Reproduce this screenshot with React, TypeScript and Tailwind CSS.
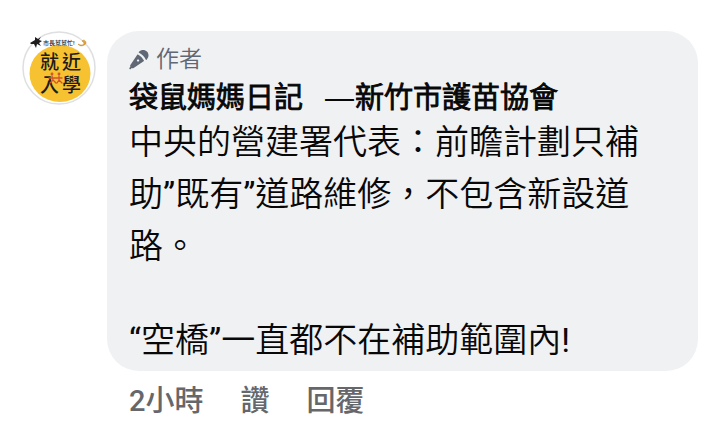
function Avatar() {
  return (
    <svg viewBox="0 0 74 74" className="size-[74px] shrink-0" role="img" aria-label="就近入學">
      <circle cx="37" cy="37" r="36" fill="#fff" stroke="#dedfe1" strokeWidth="1.5" />
      <ellipse cx="38" cy="42.500" rx="30.500" ry="28.500" fill="#f7c231" />
      <g fill="#1c1c1c">
        <path d="M8 12l5-3 0-3 3 2 3-2-2 3 3 1-3 2 2 3-4-2-1 4-2-4-3 0z" />
        <text x="21" y="14" fontSize="6" fontWeight="500">市長幫幫忙!</text>
        <g fontSize="19" fontWeight="500">
          <text x="18" y="38">就</text>
          <text x="40" y="38">近</text>
          <text x="18" y="61">入</text>
          <text x="40" y="61">學</text>
        </g>
      </g>
      <path
        d="M56 13c3 2 6 1 6-1 0-1-1-1-2-2 2-2 4 0 4 2-1 3-6 4-8 1z"
        fill="#e9a52c"
        stroke="#b9791c"
        strokeWidth="0.500"
      />
      <g fill="none" stroke="#d2552b" strokeWidth="1.300" strokeLinecap="round">
        <path d="M30 45l1 4-3 3M31 49l3 3M27 47l7 0M37 45v4l-2 3M37 49l3 3M34 47l6 0" />
        <circle cx="30" cy="43" r="0.800" />
        <circle cx="37" cy="43" r="0.800" />
      </g>
    </svg>
  );
}

function MicIcon() {
  return (
    <svg viewBox="0 0 20 20" className="size-5" fill="#606775" aria-hidden="true">
      <g transform="translate(13 6.500) rotate(45)">
        <path d="M-5.500-1C-5.500-4.500-3-7 0-7s5.500 2.500 5.500 6c0 .5-.4.700-.8.500-3-1-6.400-1-9.400 0-.4.200-.8 0-.8-.5z" />
        <path
          fillRule="evenodd"
          d="M-4.200 1.500c2.800-.8 5.600-.8 8.400 0 .3.100.4.400.3.700L2.200 14c-.2.900-.6 1.300-1.300 1.500V17c0 .7-1.800.7-1.800 0v-1.500c-.7-.2-1.100-.6-1.300-1.500L-4.500 2.200c-.1-.3 0-.6.300-.7zM0 4.500a1.100 1.100 0 1 0 0 2.200 1.100 1.100 0 0 0 0-2.200z"
        />
      </g>
    </svg>
  );
}

export default function App() {
  return (
    <main
      lang="zh-Hant"
      className="flex min-h-screen items-start gap-[11px] bg-white pt-[31px] pr-[22px] pl-[22px] font-[Roboto,'Noto_Sans_CJK_TC',sans-serif]"
    >
      <Avatar />
      <article className="min-w-0 flex-1">
        <div className="rounded-[32px] bg-[#f0f1f3] px-[22px] pt-[13px] pb-[5px] font-[Roboto,'Noto_Sans_CJK_TC_DemiLight','Noto_Sans_CJK_TC',sans-serif] text-[#080809]">
          <div className="flex h-8 items-center gap-[7px] text-[23px] leading-8 text-[#606775]">
            <MicIcon />
            <span>作者</span>
          </div>
          <h2 className="mt-1 text-[29px] leading-9 font-[350] [-webkit-text-stroke:1px]">
            <a href="#author" className="flex items-baseline">
              <span className="mr-[22px]">袋鼠媽媽日記</span>
              <span className="mr-px font-['Liberation_Sans',sans-serif] font-normal [-webkit-text-stroke:0]">—</span>
              <span>新竹市護苗協會</span>
            </a>
          </h2>
          <div className="flex flex-col gap-[42px] text-[34px] leading-[52px]">
            <p>中央的營建署代表：前瞻計劃只補助”既有”道路維修，不包含新設道路。</p>
            <p>“空橋”一直都不在補助範圍內!</p>
          </div>
        </div>
        <footer className="flex items-center gap-[37px] px-[22px] pt-[9px] text-[29px] leading-[42px] font-medium text-[#65676b]">
          <time>2小時</time>
          <button type="button">讚</button>
          <button type="button">回覆</button>
        </footer>
      </article>
    </main>
  );
}
